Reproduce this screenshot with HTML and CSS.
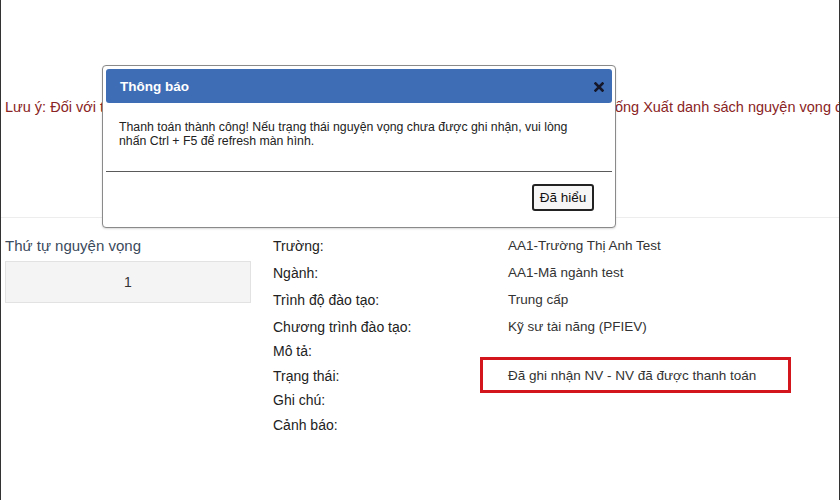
FILE: index.html
```html
<!DOCTYPE html>
<html lang="vi">
<head>
<meta charset="utf-8">
<title>Thông báo</title>
<link rel="stylesheet" href="styles.css">
</head>
<body>
<div class="page">
  <div class="top">
    <p class="note">Lưu ý: Đối với thí sinh đã thanh toán thành công, để kiểm tra lại trạng thái nguyện vọng ở hệ thống Xuất danh sách nguyện vọng để kiểm tra.</p>
  </div>
  <div class="content">
    <div class="order">
      <div class="order-title">Thứ tự nguyện vọng</div>
      <div class="order-box">1</div>
    </div>
    <div class="details">
      <div class="row"><span class="label">Trường:</span><span class="value">AA1-Trường Thị Anh Test</span></div>
      <div class="row"><span class="label">Ngành:</span><span class="value">AA1-Mã ngành test</span></div>
      <div class="row"><span class="label">Trình độ đào tạo:</span><span class="value">Trung cấp</span></div>
      <div class="row"><span class="label">Chương trình đào tạo:</span><span class="value">Kỹ sư tài năng (PFIEV)</span></div>
      <div class="row empty"><span class="label">Mô tả:</span><span class="value"></span></div>
      <div class="row"><span class="label">Trạng thái:</span><span class="value">Đã ghi nhận NV - NV đã được thanh toán</span></div>
      <div class="row empty"><span class="label">Ghi chú:</span><span class="value"></span></div>
      <div class="row"><span class="label">Cảnh báo:</span><span class="value"></span></div>
    </div>
  </div>
  <div class="highlight"></div>
  <div class="modal">
    <div class="modal-header">
      <span class="modal-title">Thông báo</span>
      <svg class="close" width="10" height="10" viewBox="0 0 10 10"><path d="M1.5 1.5 L8.5 8.5 M8.5 1.5 L1.5 8.5" stroke="#16182a" stroke-width="2.6" stroke-linecap="square"/></svg>
    </div>
    <div class="modal-body">Thanh toán thành công! Nếu trạng thái nguyện vọng chưa được ghi nhận, vui lòng nhấn Ctrl + F5 để refresh màn hình.</div>
    <div class="modal-footer">
      <button class="btn">Đã hiểu</button>
    </div>
  </div>
</div>
</body>
</html>
```
FILE: styles.css
```css
html, body {
  margin: 0;
  padding: 0;
  background: #fff;
}
body {
  font-family: "Liberation Sans", Arial, sans-serif;
  color: #333;
  overflow: hidden;
}
.page {
  position: relative;
  width: 840px;
  height: 500px;
  box-sizing: border-box;
  border-left: 1px solid #333;
  border-right: 1px solid #333;
  overflow: hidden;
}
.top {
  height: 217px;
  border-bottom: 1px solid #ededed;
}
.note {
  margin: 0;
  padding: 97px 0 0 4px;
  font-size: 14.5px;
  line-height: 20px;
  color: #8a2424;
  white-space: nowrap;
}
.content {
  display: flex;
  padding-top: 14px;
}
.order {
  width: 246px;
  margin-left: 4px;
}
.order-title {
  font-size: 15px;
  line-height: 27px;
  color: #3b4a5c;
}
.order-box {
  margin-top: 2px;
  height: 42px;
  box-sizing: border-box;
  border: 1px solid #e2e2e2;
  background: #f4f4f4;
  text-align: center;
  font-size: 14px;
  line-height: 40px;
  color: #333;
}
.details {
  margin-left: 22px;
  display: flex;
  flex-direction: column;
}
.row {
  display: flex;
  align-items: center;
  height: 27px;
  font-size: 14px;
}
.row.empty {
  height: 22px;
}
.label {
  width: 235px;
  color: #222;
}
.value {
  color: #333;
  font-size: 13.5px;
}
.highlight {
  position: absolute;
  left: 479px;
  top: 357px;
  width: 311px;
  height: 36px;
  box-sizing: border-box;
  border: 3px solid #d3161e;
}
.modal {
  position: absolute;
  left: 101px;
  top: 65px;
  width: 514px;
  height: 163px;
  box-sizing: border-box;
  border: 1px solid #8a8a8a;
  border-radius: 4px;
  background: #fff;
  padding: 3px;
  display: flex;
  flex-direction: column;
  box-shadow: 0 1px 2px rgba(0,0,0,0.15);
}
.modal-header {
  height: 34px;
  flex: none;
  background: #3e6db6;
  border-radius: 3px;
  display: flex;
  align-items: center;
  justify-content: space-between;
  padding: 0 8px 0 14px;
}
.modal-title {
  color: #fff;
  font-weight: bold;
  font-size: 13.5px;
}
.close {
  display: block;
  margin-top: 1px;
}
.modal-body {
  height: 69px;
  flex: none;
  box-sizing: border-box;
  padding: 17px 20px 0 13px;
  font-size: 12.3px;
  line-height: 14px;
  color: #222;
  border-bottom: 1px solid #5a5a5a;
}
.modal-footer {
  display: flex;
  justify-content: flex-end;
  padding: 12px 18px 0 0;
}
.btn {
  width: 62px;
  height: 27px;
  box-sizing: border-box;
  border: 2px solid #222;
  border-radius: 3px;
  background: #f6f6f6;
  font-family: "Liberation Sans", Arial, sans-serif;
  font-size: 13.5px;
  color: #111;
  padding: 0;
}
```
